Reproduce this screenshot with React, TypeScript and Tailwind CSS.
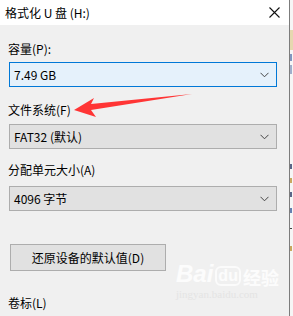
import React from "react";

const font = { fontFamily: '"Microsoft YaHei UI", "Noto Sans CJK SC", "Noto Sans", sans-serif' };

function Chevron() {
  return (
    <svg width="9" height="6" viewBox="0 0 9 6" className="shrink-0">
      <path d="M0.5 0.8 L4.5 4.8 L8.5 0.8" fill="none" stroke="#444" strokeWidth="1" />
    </svg>
  );
}

function Combo({ value, active }: { value: string; active?: boolean }) {
  return (
    <div
      className={
        "flex items-center justify-between h-[25px] w-[268px] pl-[4px] pr-[7px] border " +
        (active ? "border-[#0078d7] bg-[#e5f1fb]" : "border-[#adadad] bg-[#e1e1e1]")
      }
    >
      <span className="text-[12px] leading-none text-black">{value}</span>
      <Chevron />
    </div>
  );
}

export default function App() {
  return (
    <div className="flex w-[293px] h-[316px] overflow-hidden bg-[#f0f0f0] text-black" style={font}>
      <div className="relative w-[289px] h-full flex flex-col">
        <div className="h-[25px] bg-white flex items-center justify-between pl-[5px] pr-[9px]">
          <span className="text-[12px] leading-none">格式化 U 盘 (H:)</span>
          <svg width="11" height="11" viewBox="0 0 11 11">
            <path d="M0.5 0.5 L10.5 10.5 M10.5 0.5 L0.5 10.5" stroke="#111" strokeWidth="1.1" />
          </svg>
        </div>

        <div className="flex flex-col pl-[9px]">
          <div className="mt-[16px] -ml-[1px] h-[16px] text-[12px] leading-[16px]">容量(P):</div>
          <div className="mt-[5px]">
            <Combo value="7.49 GB" active />
          </div>

          <div className="mt-[15px] -ml-[1px] h-[16px] text-[12px] leading-[16px]">文件系统(F)</div>
          <div className="mt-[6px]">
            <Combo value="FAT32 (默认)" />
          </div>

          <div className="mt-[13px] -ml-[1px] h-[16px] text-[12px] leading-[16px]">分配单元大小(A)</div>
          <div className="mt-[8px]">
            <Combo value="4096 字节" />
          </div>

          <button className="mt-[33px] ml-[1px] w-[156px] h-[27px] border border-[#adadad] bg-[#e1e1e1] text-[12px] leading-none">
            还原设备的默认值(D)
          </button>

          <div className="mt-[24px] -ml-[1px] h-[16px] text-[12px] leading-[16px]">卷标(L)</div>
        </div>

        {/* red annotation arrow */}
        <svg className="absolute left-0 top-0 pointer-events-none" width="289" height="316">
          <polygon points="74,110 94,98 91,104 192,94 91,110 96,117" fill="#ff3535" />
        </svg>

        {/* watermark */}
        <div className="absolute left-[176px] top-[262px] flex flex-col items-start pointer-events-none">
          <div className="flex items-end gap-[2px]">
            <span className="text-[24px] leading-none font-bold italic text-white/80" style={{ fontFamily: '"Liberation Sans", sans-serif' }}>
              Bai
            </span>
            <span className="text-[16px] leading-none font-bold text-white/80 rounded-[6px] border-2 border-white/70 px-[1px]" style={{ fontFamily: '"Liberation Sans", sans-serif' }}>
              du
            </span>
            <span className="text-[18px] leading-none font-bold text-white/80">经验</span>
          </div>
          <span className="text-[11px] leading-none mt-[3px] text-[#e4e4e4]" style={{ fontFamily: '"Liberation Serif", serif' }}>
            jingyan.baidu.com
          </span>
        </div>
      </div>

      <div className="w-[1px] h-full bg-[#7c7c7c]" />
      <div className="w-[3px] h-full bg-[#f6f6f6] flex flex-col">
        <div className="h-[30px]" />
        <div className="h-[20px] bg-[#e6d8b0]" />
        <div className="h-[4px]" />
        <div className="h-[7px] w-[2px] bg-[#8296c0]" />
        <div className="h-[4px]" />
        <div className="h-[9px] w-[2px] bg-[#a0aecb]" />
        <div className="h-[90px]" />
        <div className="h-[5px] w-[2px] bg-[#5a6688]" />
        <div className="h-[9px]" />
        <div className="h-[5px] w-[2px] bg-[#c9a860]" />
        <div className="h-[9px]" />
        <div className="h-[5px] w-[2px] bg-[#5a6688]" />
        <div className="h-[11px]" />
        <div className="h-[5px] w-[2px] bg-[#6680b0]" />
        <div className="h-[15px]" />
        <div className="h-[1px] w-[2px] bg-[#444]" />
        <div className="h-[17px]" />
        <div className="h-[5px] w-[2px] bg-[#c9a860]" />
      </div>
    </div>
  );
}
